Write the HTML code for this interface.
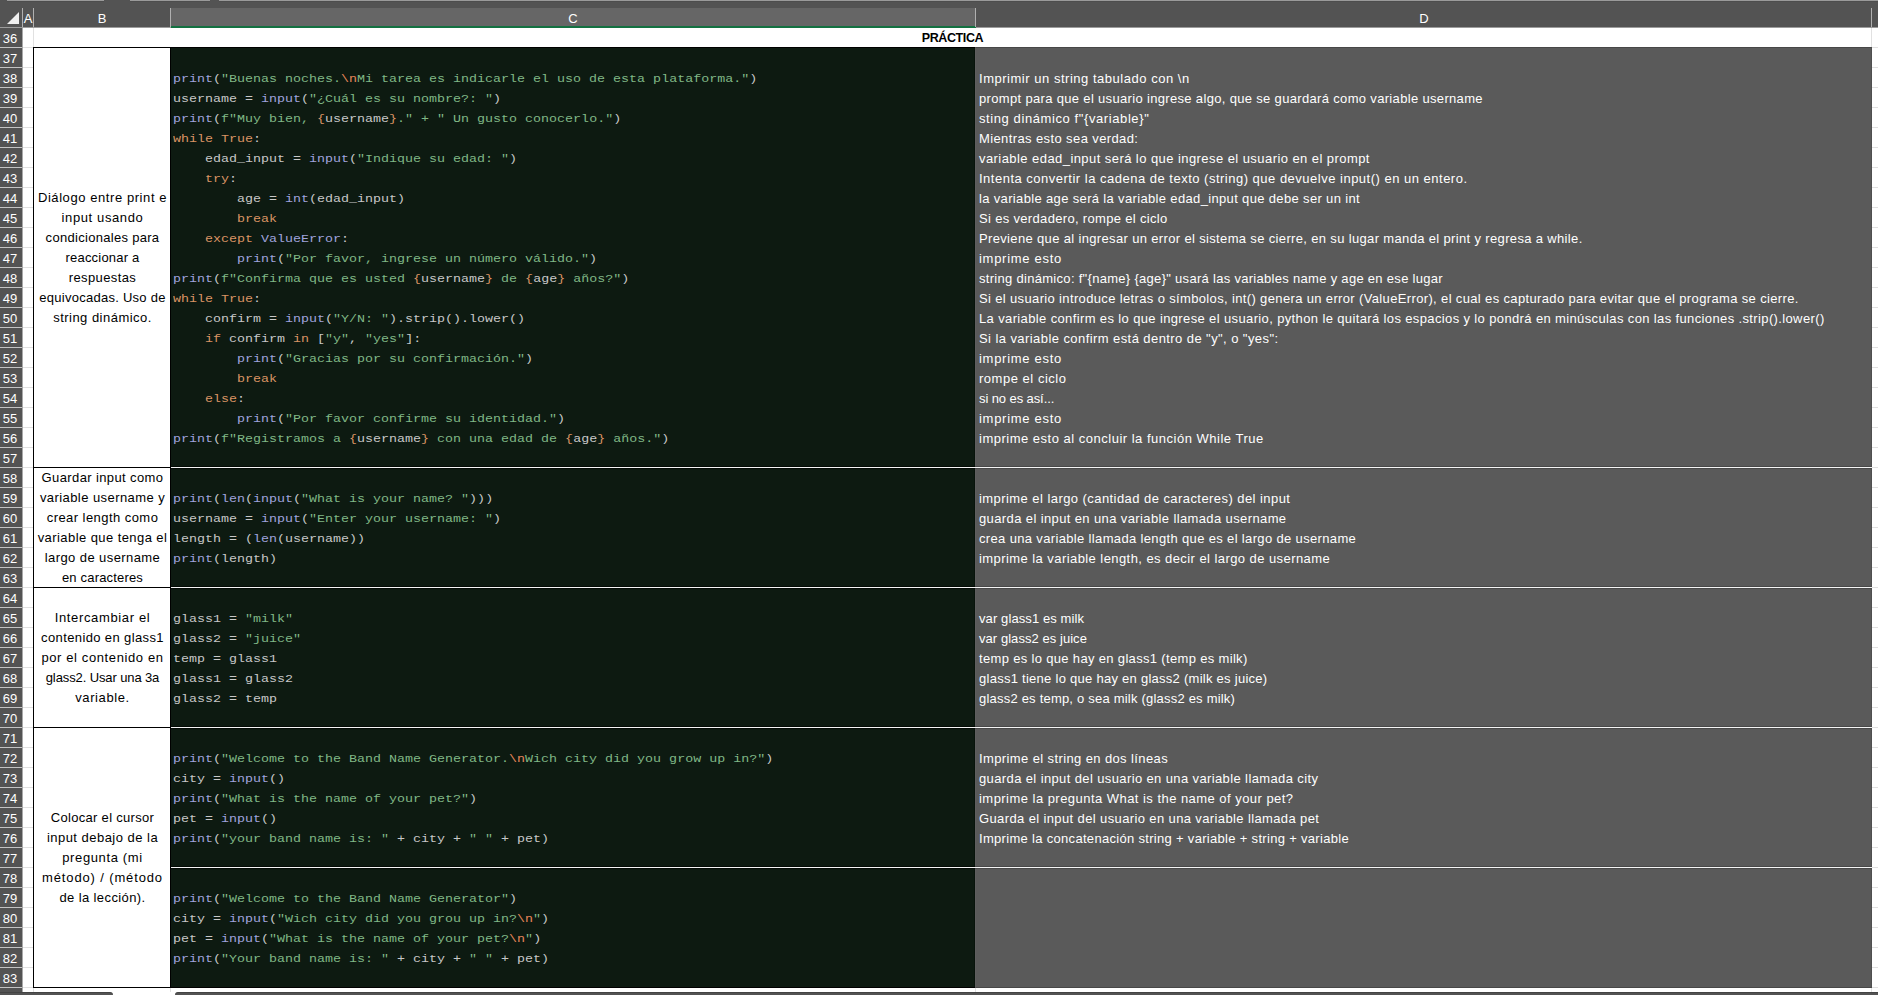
<!DOCTYPE html><html><head><meta charset="utf-8"><style>

html,body{margin:0;padding:0}
body{width:1878px;height:995px;overflow:hidden;position:relative;background:#fff;font-family:"Liberation Sans",sans-serif}
div{position:absolute;box-sizing:border-box}
.rn{left:-1px;width:22px;height:20px;color:#fff;font-size:13px;text-align:center;line-height:20px}
.ch{top:10px;height:18px;color:#fff;font-size:13px;text-align:center;line-height:18px}
.code{left:173px;height:20px;font-family:"Liberation Mono",monospace;font-size:11.5px;letter-spacing:0;line-height:20px;white-space:pre;transform:scaleX(1.15942);transform-origin:0 0;color:#c8c8c8}
.d{left:979px;height:20px;font-size:13px;line-height:20px;white-space:pre;color:#fff;letter-spacing:0.37px}
.b{left:34.5px;width:136px;height:20px;font-size:13px;line-height:20px;white-space:pre;color:#000;text-align:center;letter-spacing:0.37px}
.f{color:#a0a4de}.s{color:#80b886}.k{color:#da9464}.e{color:#e8875a}

</style></head><body>
<div style="left:0;top:0;width:1878px;height:28px;background:#535353"></div>
<div style="left:7px;top:0;width:97px;height:1px;background:#9a9a9a"></div>
<div style="left:7px;top:1px;width:97px;height:1px;background:#4d4d4d"></div>
<div style="left:130px;top:0;width:80px;height:1px;background:#9a9a9a"></div>
<div style="left:130px;top:1px;width:80px;height:1px;background:#4d4d4d"></div>
<div style="left:219px;top:0;width:1659px;height:1px;background:#9a9a9a"></div>
<div style="left:219px;top:1px;width:1659px;height:1px;background:#4d4d4d"></div>
<div style="left:171px;top:8px;width:804px;height:18px;background:#666"></div>
<div style="left:170px;top:26px;width:806px;height:2px;background:#137141"></div>
<div style="left:0;top:27px;width:171px;height:1px;background:#9c9c9c"></div>
<div style="left:976px;top:27px;width:902px;height:1px;background:#9c9c9c"></div>
<div style="left:22px;top:8px;width:1px;height:19px;background:#b0b0b0"></div>
<div style="left:33px;top:8px;width:1px;height:19px;background:#b0b0b0"></div>
<div style="left:170px;top:8px;width:1px;height:19px;background:#b0b0b0"></div>
<div style="left:975px;top:8px;width:1px;height:19px;background:#b0b0b0"></div>
<div style="left:1871px;top:8px;width:1px;height:19px;background:#b0b0b0"></div>
<div style="left:7px;top:12px;width:0;height:0;border-left:12px solid transparent;border-bottom:12px solid #efefef"></div>
<div class="ch" style="left:23px;width:10px">A</div>
<div class="ch" style="left:34px;width:136px">B</div>
<div class="ch" style="left:171px;width:804px">C</div>
<div class="ch" style="left:976px;width:896px">D</div>
<div style="left:0;top:28px;width:22px;height:967px;background:#535353"></div>
<div style="left:22px;top:28px;width:1px;height:967px;background:#a8a8a8"></div>
<div style="left:0;top:47px;width:22px;height:1px;background:#c4c4c4"></div>
<div class="rn" style="top:29px">36</div>
<div style="left:0;top:67px;width:22px;height:1px;background:#c4c4c4"></div>
<div class="rn" style="top:49px">37</div>
<div style="left:0;top:87px;width:22px;height:1px;background:#c4c4c4"></div>
<div class="rn" style="top:69px">38</div>
<div style="left:0;top:107px;width:22px;height:1px;background:#c4c4c4"></div>
<div class="rn" style="top:89px">39</div>
<div style="left:0;top:127px;width:22px;height:1px;background:#c4c4c4"></div>
<div class="rn" style="top:109px">40</div>
<div style="left:0;top:147px;width:22px;height:1px;background:#c4c4c4"></div>
<div class="rn" style="top:129px">41</div>
<div style="left:0;top:167px;width:22px;height:1px;background:#c4c4c4"></div>
<div class="rn" style="top:149px">42</div>
<div style="left:0;top:187px;width:22px;height:1px;background:#c4c4c4"></div>
<div class="rn" style="top:169px">43</div>
<div style="left:0;top:207px;width:22px;height:1px;background:#c4c4c4"></div>
<div class="rn" style="top:189px">44</div>
<div style="left:0;top:227px;width:22px;height:1px;background:#c4c4c4"></div>
<div class="rn" style="top:209px">45</div>
<div style="left:0;top:247px;width:22px;height:1px;background:#c4c4c4"></div>
<div class="rn" style="top:229px">46</div>
<div style="left:0;top:267px;width:22px;height:1px;background:#c4c4c4"></div>
<div class="rn" style="top:249px">47</div>
<div style="left:0;top:287px;width:22px;height:1px;background:#c4c4c4"></div>
<div class="rn" style="top:269px">48</div>
<div style="left:0;top:307px;width:22px;height:1px;background:#c4c4c4"></div>
<div class="rn" style="top:289px">49</div>
<div style="left:0;top:327px;width:22px;height:1px;background:#c4c4c4"></div>
<div class="rn" style="top:309px">50</div>
<div style="left:0;top:347px;width:22px;height:1px;background:#c4c4c4"></div>
<div class="rn" style="top:329px">51</div>
<div style="left:0;top:367px;width:22px;height:1px;background:#c4c4c4"></div>
<div class="rn" style="top:349px">52</div>
<div style="left:0;top:387px;width:22px;height:1px;background:#c4c4c4"></div>
<div class="rn" style="top:369px">53</div>
<div style="left:0;top:407px;width:22px;height:1px;background:#c4c4c4"></div>
<div class="rn" style="top:389px">54</div>
<div style="left:0;top:427px;width:22px;height:1px;background:#c4c4c4"></div>
<div class="rn" style="top:409px">55</div>
<div style="left:0;top:447px;width:22px;height:1px;background:#c4c4c4"></div>
<div class="rn" style="top:429px">56</div>
<div style="left:0;top:467px;width:22px;height:1px;background:#c4c4c4"></div>
<div class="rn" style="top:449px">57</div>
<div style="left:0;top:487px;width:22px;height:1px;background:#c4c4c4"></div>
<div class="rn" style="top:469px">58</div>
<div style="left:0;top:507px;width:22px;height:1px;background:#c4c4c4"></div>
<div class="rn" style="top:489px">59</div>
<div style="left:0;top:527px;width:22px;height:1px;background:#c4c4c4"></div>
<div class="rn" style="top:509px">60</div>
<div style="left:0;top:547px;width:22px;height:1px;background:#c4c4c4"></div>
<div class="rn" style="top:529px">61</div>
<div style="left:0;top:567px;width:22px;height:1px;background:#c4c4c4"></div>
<div class="rn" style="top:549px">62</div>
<div style="left:0;top:587px;width:22px;height:1px;background:#c4c4c4"></div>
<div class="rn" style="top:569px">63</div>
<div style="left:0;top:607px;width:22px;height:1px;background:#c4c4c4"></div>
<div class="rn" style="top:589px">64</div>
<div style="left:0;top:627px;width:22px;height:1px;background:#c4c4c4"></div>
<div class="rn" style="top:609px">65</div>
<div style="left:0;top:647px;width:22px;height:1px;background:#c4c4c4"></div>
<div class="rn" style="top:629px">66</div>
<div style="left:0;top:667px;width:22px;height:1px;background:#c4c4c4"></div>
<div class="rn" style="top:649px">67</div>
<div style="left:0;top:687px;width:22px;height:1px;background:#c4c4c4"></div>
<div class="rn" style="top:669px">68</div>
<div style="left:0;top:707px;width:22px;height:1px;background:#c4c4c4"></div>
<div class="rn" style="top:689px">69</div>
<div style="left:0;top:727px;width:22px;height:1px;background:#c4c4c4"></div>
<div class="rn" style="top:709px">70</div>
<div style="left:0;top:747px;width:22px;height:1px;background:#c4c4c4"></div>
<div class="rn" style="top:729px">71</div>
<div style="left:0;top:767px;width:22px;height:1px;background:#c4c4c4"></div>
<div class="rn" style="top:749px">72</div>
<div style="left:0;top:787px;width:22px;height:1px;background:#c4c4c4"></div>
<div class="rn" style="top:769px">73</div>
<div style="left:0;top:807px;width:22px;height:1px;background:#c4c4c4"></div>
<div class="rn" style="top:789px">74</div>
<div style="left:0;top:827px;width:22px;height:1px;background:#c4c4c4"></div>
<div class="rn" style="top:809px">75</div>
<div style="left:0;top:847px;width:22px;height:1px;background:#c4c4c4"></div>
<div class="rn" style="top:829px">76</div>
<div style="left:0;top:867px;width:22px;height:1px;background:#c4c4c4"></div>
<div class="rn" style="top:849px">77</div>
<div style="left:0;top:887px;width:22px;height:1px;background:#c4c4c4"></div>
<div class="rn" style="top:869px">78</div>
<div style="left:0;top:907px;width:22px;height:1px;background:#c4c4c4"></div>
<div class="rn" style="top:889px">79</div>
<div style="left:0;top:927px;width:22px;height:1px;background:#c4c4c4"></div>
<div class="rn" style="top:909px">80</div>
<div style="left:0;top:947px;width:22px;height:1px;background:#c4c4c4"></div>
<div class="rn" style="top:929px">81</div>
<div style="left:0;top:967px;width:22px;height:1px;background:#c4c4c4"></div>
<div class="rn" style="top:949px">82</div>
<div style="left:0;top:987px;width:22px;height:1px;background:#c4c4c4"></div>
<div class="rn" style="top:969px">83</div>
<div style="left:0;top:1007px;width:22px;height:1px;background:#c4c4c4"></div>
<div class="rn" style="top:989px">84</div>
<div style="left:23px;top:47px;width:1855px;height:1px;background:#e1e1e1"></div>
<div style="left:23px;top:67px;width:1855px;height:1px;background:#e1e1e1"></div>
<div style="left:23px;top:87px;width:1855px;height:1px;background:#e1e1e1"></div>
<div style="left:23px;top:107px;width:1855px;height:1px;background:#e1e1e1"></div>
<div style="left:23px;top:127px;width:1855px;height:1px;background:#e1e1e1"></div>
<div style="left:23px;top:147px;width:1855px;height:1px;background:#e1e1e1"></div>
<div style="left:23px;top:167px;width:1855px;height:1px;background:#e1e1e1"></div>
<div style="left:23px;top:187px;width:1855px;height:1px;background:#e1e1e1"></div>
<div style="left:23px;top:207px;width:1855px;height:1px;background:#e1e1e1"></div>
<div style="left:23px;top:227px;width:1855px;height:1px;background:#e1e1e1"></div>
<div style="left:23px;top:247px;width:1855px;height:1px;background:#e1e1e1"></div>
<div style="left:23px;top:267px;width:1855px;height:1px;background:#e1e1e1"></div>
<div style="left:23px;top:287px;width:1855px;height:1px;background:#e1e1e1"></div>
<div style="left:23px;top:307px;width:1855px;height:1px;background:#e1e1e1"></div>
<div style="left:23px;top:327px;width:1855px;height:1px;background:#e1e1e1"></div>
<div style="left:23px;top:347px;width:1855px;height:1px;background:#e1e1e1"></div>
<div style="left:23px;top:367px;width:1855px;height:1px;background:#e1e1e1"></div>
<div style="left:23px;top:387px;width:1855px;height:1px;background:#e1e1e1"></div>
<div style="left:23px;top:407px;width:1855px;height:1px;background:#e1e1e1"></div>
<div style="left:23px;top:427px;width:1855px;height:1px;background:#e1e1e1"></div>
<div style="left:23px;top:447px;width:1855px;height:1px;background:#e1e1e1"></div>
<div style="left:23px;top:467px;width:1855px;height:1px;background:#e1e1e1"></div>
<div style="left:23px;top:487px;width:1855px;height:1px;background:#e1e1e1"></div>
<div style="left:23px;top:507px;width:1855px;height:1px;background:#e1e1e1"></div>
<div style="left:23px;top:527px;width:1855px;height:1px;background:#e1e1e1"></div>
<div style="left:23px;top:547px;width:1855px;height:1px;background:#e1e1e1"></div>
<div style="left:23px;top:567px;width:1855px;height:1px;background:#e1e1e1"></div>
<div style="left:23px;top:587px;width:1855px;height:1px;background:#e1e1e1"></div>
<div style="left:23px;top:607px;width:1855px;height:1px;background:#e1e1e1"></div>
<div style="left:23px;top:627px;width:1855px;height:1px;background:#e1e1e1"></div>
<div style="left:23px;top:647px;width:1855px;height:1px;background:#e1e1e1"></div>
<div style="left:23px;top:667px;width:1855px;height:1px;background:#e1e1e1"></div>
<div style="left:23px;top:687px;width:1855px;height:1px;background:#e1e1e1"></div>
<div style="left:23px;top:707px;width:1855px;height:1px;background:#e1e1e1"></div>
<div style="left:23px;top:727px;width:1855px;height:1px;background:#e1e1e1"></div>
<div style="left:23px;top:747px;width:1855px;height:1px;background:#e1e1e1"></div>
<div style="left:23px;top:767px;width:1855px;height:1px;background:#e1e1e1"></div>
<div style="left:23px;top:787px;width:1855px;height:1px;background:#e1e1e1"></div>
<div style="left:23px;top:807px;width:1855px;height:1px;background:#e1e1e1"></div>
<div style="left:23px;top:827px;width:1855px;height:1px;background:#e1e1e1"></div>
<div style="left:23px;top:847px;width:1855px;height:1px;background:#e1e1e1"></div>
<div style="left:23px;top:867px;width:1855px;height:1px;background:#e1e1e1"></div>
<div style="left:23px;top:887px;width:1855px;height:1px;background:#e1e1e1"></div>
<div style="left:23px;top:907px;width:1855px;height:1px;background:#e1e1e1"></div>
<div style="left:23px;top:927px;width:1855px;height:1px;background:#e1e1e1"></div>
<div style="left:23px;top:947px;width:1855px;height:1px;background:#e1e1e1"></div>
<div style="left:23px;top:967px;width:1855px;height:1px;background:#e1e1e1"></div>
<div style="left:23px;top:987px;width:1855px;height:1px;background:#e1e1e1"></div>
<div style="left:23px;top:1007px;width:1855px;height:1px;background:#e1e1e1"></div>
<div style="left:33px;top:28px;width:1px;height:964px;background:#e1e1e1"></div>
<div style="left:170px;top:28px;width:1px;height:964px;background:#e1e1e1"></div>
<div style="left:975px;top:28px;width:1px;height:964px;background:#e1e1e1"></div>
<div style="left:1871px;top:28px;width:1px;height:964px;background:#e1e1e1"></div>
<div style="left:34px;top:28px;width:1837px;height:19px;background:#fff"></div>
<div style="left:34px;top:28px;width:1837px;height:20px;font-size:12.5px;font-weight:bold;text-align:center;line-height:20px;color:#000;letter-spacing:-0.4px">PRÁCTICA</div>
<div style="left:33px;top:47px;width:138px;height:941px;border:1px solid #000;background:#fff"></div>
<div style="left:33px;top:467px;width:138px;height:1px;background:#000"></div>
<div style="left:33px;top:587px;width:138px;height:1px;background:#000"></div>
<div style="left:33px;top:727px;width:138px;height:1px;background:#000"></div>
<div style="left:171px;top:47px;width:804px;height:941px;background:#0d1a11;border-top:1px solid #000;border-bottom:1px solid #000"></div>
<div style="left:974px;top:48px;width:1px;height:939px;background:#08130b"></div>
<div style="left:975px;top:47px;width:897px;height:941px;background:#5a5a5a;border-top:1px solid #474747;border-bottom:1px solid #474747;border-right:1px solid #4f4f4f;border-left:1px solid #5e5e5e"></div>
<div style="left:171px;top:466px;width:804px;height:3px;background:#030a05"></div>
<div style="left:975px;top:466px;width:897px;height:3px;background:#484848"></div>
<div style="left:171px;top:467px;width:1701px;height:1px;background:#f4f4f4"></div>
<div style="left:171px;top:586px;width:804px;height:3px;background:#030a05"></div>
<div style="left:975px;top:586px;width:897px;height:3px;background:#484848"></div>
<div style="left:171px;top:587px;width:1701px;height:1px;background:#f4f4f4"></div>
<div style="left:171px;top:726px;width:804px;height:3px;background:#030a05"></div>
<div style="left:975px;top:726px;width:897px;height:3px;background:#484848"></div>
<div style="left:171px;top:727px;width:1701px;height:1px;background:#f4f4f4"></div>
<div style="left:171px;top:866px;width:804px;height:3px;background:#030a05"></div>
<div style="left:975px;top:866px;width:897px;height:3px;background:#484848"></div>
<div style="left:171px;top:867px;width:1701px;height:1px;background:#f4f4f4"></div>
<div style="left:0;top:992px;width:113px;height:3px;background:#535353;border-top:1px solid #444;border-radius:0 3px 0 0"></div>
<div style="left:175px;top:992px;width:1703px;height:3px;background:#535353;border-top:1px solid #444;border-radius:3px 0 0 0"></div>
<div class="b" style="top:188px;letter-spacing:0.575px">Diálogo entre print e</div>
<div class="b" style="top:208px;letter-spacing:0.615px">input usando</div>
<div class="b" style="top:228px;letter-spacing:0.299px">condicionales para</div>
<div class="b" style="top:248px;letter-spacing:0.206px">reaccionar a</div>
<div class="b" style="top:268px;letter-spacing:0.381px">respuestas</div>
<div class="b" style="top:288px;letter-spacing:0.259px">equivocadas. Uso de</div>
<div class="b" style="top:308px;letter-spacing:0.477px">string dinámico.</div>
<div class="b" style="top:468px;letter-spacing:0.382px">Guardar input como</div>
<div class="b" style="top:488px;letter-spacing:0.431px">variable username y</div>
<div class="b" style="top:508px;letter-spacing:0.445px">crear length como</div>
<div class="b" style="top:528px;letter-spacing:0.425px">variable que tenga el</div>
<div class="b" style="top:548px;letter-spacing:0.414px">largo de username</div>
<div class="b" style="top:568px;letter-spacing:0.178px">en caracteres</div>
<div class="b" style="top:608px;letter-spacing:0.649px">Intercambiar el</div>
<div class="b" style="top:628px;letter-spacing:0.376px">contenido en glass1</div>
<div class="b" style="top:648px;letter-spacing:0.614px">por el contenido en</div>
<div class="b" style="top:668px;letter-spacing:-0.113px">glass2. Usar una 3a</div>
<div class="b" style="top:688px;letter-spacing:0.595px">variable.</div>
<div class="b" style="top:808px;letter-spacing:0.307px">Colocar el cursor</div>
<div class="b" style="top:828px;letter-spacing:0.476px">input debajo de la</div>
<div class="b" style="top:848px;letter-spacing:0.634px">pregunta (mi</div>
<div class="b" style="top:868px;letter-spacing:0.864px">método) / (método</div>
<div class="b" style="top:888px;letter-spacing:0.399px">de la lección).</div>
<div class="d" style="top:69px;letter-spacing:0.522px">Imprimir un string tabulado con \n</div>
<div class="d" style="top:89px;letter-spacing:0.332px">prompt para que el usuario ingrese algo, que se guardará como variable username</div>
<div class="d" style="top:109px;letter-spacing:0.592px">sting dinámico f&quot;{variable}&quot;</div>
<div class="d" style="top:129px;letter-spacing:0.391px">Mientras esto sea verdad:</div>
<div class="d" style="top:149px;letter-spacing:0.435px">variable edad_input será lo que ingrese el usuario en el prompt</div>
<div class="d" style="top:169px;letter-spacing:0.497px">Intenta convertir la cadena de texto (string) que devuelve input() en un entero.</div>
<div class="d" style="top:189px;letter-spacing:0.346px">la variable age será la variable edad_input que debe ser un int</div>
<div class="d" style="top:209px;letter-spacing:0.327px">Si es verdadero, rompe el ciclo</div>
<div class="d" style="top:229px;letter-spacing:0.346px">Previene que al ingresar un error el sistema se cierre, en su lugar manda el print y regresa a while.</div>
<div class="d" style="top:249px;letter-spacing:0.715px">imprime esto</div>
<div class="d" style="top:269px;letter-spacing:0.297px">string dinámico: f&quot;{name} {age}&quot; usará las variables name y age en ese lugar</div>
<div class="d" style="top:289px;letter-spacing:0.355px">Si el usuario introduce letras o símbolos, int() genera un error (ValueError), el cual es capturado para evitar que el programa se cierre.</div>
<div class="d" style="top:309px;letter-spacing:0.370px">La variable confirm es lo que ingrese el usuario, python le quitará los espacios y lo pondrá en minúsculas con las funciones .strip().lower()</div>
<div class="d" style="top:329px;letter-spacing:0.424px">Si la variable confirm está dentro de &quot;y&quot;, o &quot;yes&quot;:</div>
<div class="d" style="top:349px;letter-spacing:0.715px">imprime esto</div>
<div class="d" style="top:369px;letter-spacing:0.524px">rompe el ciclo</div>
<div class="d" style="top:389px;letter-spacing:-0.094px">si no es así...</div>
<div class="d" style="top:409px;letter-spacing:0.715px">imprime esto</div>
<div class="d" style="top:429px;letter-spacing:0.503px">imprime esto al concluir la función While True</div>
<div class="d" style="top:489px;letter-spacing:0.438px">imprime el largo (cantidad de caracteres) del input</div>
<div class="d" style="top:509px;letter-spacing:0.383px">guarda el input en una variable llamada username</div>
<div class="d" style="top:529px;letter-spacing:0.348px">crea una variable llamada length que es el largo de username</div>
<div class="d" style="top:549px;letter-spacing:0.431px">imprime la variable length, es decir el largo de username</div>
<div class="d" style="top:609px;letter-spacing:0.099px">var glass1 es milk</div>
<div class="d" style="top:629px;letter-spacing:0.053px">var glass2 es juice</div>
<div class="d" style="top:649px;letter-spacing:0.332px">temp es lo que hay en glass1 (temp es milk)</div>
<div class="d" style="top:669px;letter-spacing:0.268px">glass1 tiene lo que hay en glass2 (milk es juice)</div>
<div class="d" style="top:689px;letter-spacing:0.210px">glass2 es temp, o sea milk (glass2 es milk)</div>
<div class="d" style="top:749px;letter-spacing:0.387px">Imprime el string en dos líneas</div>
<div class="d" style="top:769px;letter-spacing:0.381px">guarda el input del usuario en una variable llamada city</div>
<div class="d" style="top:789px;letter-spacing:0.462px">imprime la pregunta What is the name of your pet?</div>
<div class="d" style="top:809px;letter-spacing:0.379px">Guarda el input del usuario en una variable llamada pet</div>
<div class="d" style="top:829px;letter-spacing:0.309px">Imprime la concatenación string + variable + string + variable</div>
<div class="code" style="top:69px"><span class="f">print</span>(<span class="s">&quot;Buenas noches.</span><span class="e">\n</span><span class="s">Mi tarea es indicarle el uso de esta plataforma.&quot;</span>)</div>
<div class="code" style="top:89px">username = <span class="f">input</span>(<span class="s">&quot;¿Cuál es su nombre?: &quot;</span>)</div>
<div class="code" style="top:109px"><span class="f">print</span>(<span class="s">f&quot;Muy bien, </span><span class="k">{</span>username<span class="k">}</span><span class="s">.&quot; + &quot; Un gusto conocerlo.&quot;</span>)</div>
<div class="code" style="top:129px"><span class="k">while</span> <span class="k">True</span>:</div>
<div class="code" style="top:149px">    edad_input = <span class="f">input</span>(<span class="s">&quot;Indique su edad: &quot;</span>)</div>
<div class="code" style="top:169px">    <span class="k">try</span>:</div>
<div class="code" style="top:189px">        age = <span class="f">int</span>(edad_input)</div>
<div class="code" style="top:209px">        <span class="k">break</span></div>
<div class="code" style="top:229px">    <span class="k">except</span> <span class="f">ValueError</span>:</div>
<div class="code" style="top:249px">        <span class="f">print</span>(<span class="s">&quot;Por favor, ingrese un número válido.&quot;</span>)</div>
<div class="code" style="top:269px"><span class="f">print</span>(<span class="s">f&quot;Confirma que es usted </span><span class="k">{</span>username<span class="k">}</span><span class="s"> de </span><span class="k">{</span>age<span class="k">}</span><span class="s"> años?&quot;</span>)</div>
<div class="code" style="top:289px"><span class="k">while</span> <span class="k">True</span>:</div>
<div class="code" style="top:309px">    confirm = <span class="f">input</span>(<span class="s">&quot;Y/N: &quot;</span>).strip().lower()</div>
<div class="code" style="top:329px">    <span class="k">if</span> confirm <span class="k">in</span> [<span class="s">&quot;y&quot;</span>, <span class="s">&quot;yes&quot;</span>]:</div>
<div class="code" style="top:349px">        <span class="f">print</span>(<span class="s">&quot;Gracias por su confirmación.&quot;</span>)</div>
<div class="code" style="top:369px">        <span class="k">break</span></div>
<div class="code" style="top:389px">    <span class="k">else</span>:</div>
<div class="code" style="top:409px">        <span class="f">print</span>(<span class="s">&quot;Por favor confirme su identidad.&quot;</span>)</div>
<div class="code" style="top:429px"><span class="f">print</span>(<span class="s">f&quot;Registramos a </span><span class="k">{</span>username<span class="k">}</span><span class="s"> con una edad de </span><span class="k">{</span>age<span class="k">}</span><span class="s"> años.&quot;</span>)</div>
<div class="code" style="top:489px"><span class="f">print</span>(<span class="f">len</span>(<span class="f">input</span>(<span class="s">&quot;What is your name? &quot;</span>)))</div>
<div class="code" style="top:509px">username = <span class="f">input</span>(<span class="s">&quot;Enter your username: &quot;</span>)</div>
<div class="code" style="top:529px">length = (<span class="f">len</span>(username))</div>
<div class="code" style="top:549px"><span class="f">print</span>(length)</div>
<div class="code" style="top:609px">glass1 = <span class="s">&quot;milk&quot;</span></div>
<div class="code" style="top:629px">glass2 = <span class="s">&quot;juice&quot;</span></div>
<div class="code" style="top:649px">temp = glass1</div>
<div class="code" style="top:669px">glass1 = glass2</div>
<div class="code" style="top:689px">glass2 = temp</div>
<div class="code" style="top:749px"><span class="f">print</span>(<span class="s">&quot;Welcome to the Band Name Generator.</span><span class="e">\n</span><span class="s">Wich city did you grow up in?&quot;</span>)</div>
<div class="code" style="top:769px">city = <span class="f">input</span>()</div>
<div class="code" style="top:789px"><span class="f">print</span>(<span class="s">&quot;What is the name of your pet?&quot;</span>)</div>
<div class="code" style="top:809px">pet = <span class="f">input</span>()</div>
<div class="code" style="top:829px"><span class="f">print</span>(<span class="s">&quot;your band name is: &quot;</span> + city + <span class="s">&quot; &quot;</span> + pet)</div>
<div class="code" style="top:889px"><span class="f">print</span>(<span class="s">&quot;Welcome to the Band Name Generator&quot;</span>)</div>
<div class="code" style="top:909px">city = <span class="f">input</span>(<span class="s">&quot;Wich city did you grou up in?</span><span class="e">\n</span><span class="s">&quot;</span>)</div>
<div class="code" style="top:929px">pet = <span class="f">input</span>(<span class="s">&quot;What is the name of your pet?</span><span class="e">\n</span><span class="s">&quot;</span>)</div>
<div class="code" style="top:949px"><span class="f">print</span>(<span class="s">&quot;Your band name is: &quot;</span> + city + <span class="s">&quot; &quot;</span> + pet)</div>
</body></html>
